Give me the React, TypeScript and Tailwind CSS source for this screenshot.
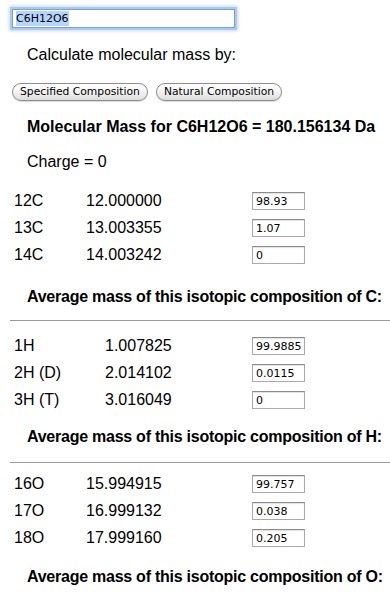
import React from 'react';

type Isotope = { name: string; mass: string; abundance: string };

const carbon: Isotope[] = [
    { name: '12C', mass: '12.000000', abundance: '98.93' },
    { name: '13C', mass: '13.003355', abundance: '1.07' },
    { name: '14C', mass: '14.003242', abundance: '0' },
];

const hydrogen: Isotope[] = [
    { name: '1H', mass: '1.007825', abundance: '99.9885' },
    { name: '2H (D)', mass: '2.014102', abundance: '0.0115' },
    { name: '3H (T)', mass: '3.016049', abundance: '0' },
];

const oxygen: Isotope[] = [
    { name: '16O', mass: '15.994915', abundance: '99.757' },
    { name: '17O', mass: '16.999132', abundance: '0.038' },
    { name: '18O', mass: '17.999160', abundance: '0.205' },
];

function IsotopeTable({ rows, cols }: { rows: Isotope[]; cols: string }) {
    return (
        <div className="pl-[14px]">
            {rows.map((r) => (
                <div key={r.name} className={`grid ${cols} items-center h-[27px]`}>
                    <span>{r.name}</span>
                    <span>{r.mass}</span>
                    <div className="w-[53px] h-[18px] border border-[#a9a9a9] border-t-[#8c8c8c] bg-white flex items-center pl-[3px] pt-[1px] text-[11px] leading-none font-['DejaVu_Sans',sans-serif] shadow-[inset_0_1px_1px_rgba(0,0,0,0.12)]">
                        {r.abundance}
                    </div>
                </div>
            ))}
        </div>
    );
}

function Heading({ children, tight }: { children: React.ReactNode; tight?: boolean }) {
    return (
        <div className={`pl-[27px] h-[18px] leading-[18px] font-bold whitespace-nowrap ${tight ? 'tracking-[-0.25px]' : ''}`}>
            {children}
        </div>
    );
}

function Btn({ children }: { children: React.ReactNode }) {
    return (
        <div className="h-[18px] px-[7px] rounded-full border border-[#8e8e8e] bg-gradient-to-b from-white via-[#f4f4f4] to-[#dcdcdc] flex items-center text-[10.75px] font-['DejaVu_Sans',sans-serif] shadow-[0_1px_1px_rgba(0,0,0,0.15)]">
            {children}
        </div>
    );
}

export default function App() {
    return (
        <div className="w-[390px] h-[595px] overflow-hidden bg-white text-black text-[16px] font-['Liberation_Sans',Arial,sans-serif] pt-[9px]">
            {/* Formula input */}
            <div className="ml-[12px] w-[223px] h-[19px] border border-[#7f9fc9] bg-white flex items-center pl-[3px] shadow-[0_0_0_2px_#a9caf2,0_0_3px_3px_rgba(110,160,225,0.4)]">
                <span className="bg-[#b5d5ff] text-[11px] leading-[15px] font-['DejaVu_Sans',sans-serif]">C6H12O6</span>
            </div>

            <div className="mt-[18px] pl-[27px] h-[18px] leading-[18px]">Calculate molecular mass by:</div>

            <div className="mt-[19px] pl-[12px] flex gap-[8px]">
                <Btn>Specified Composition</Btn>
                <Btn>Natural Composition</Btn>
            </div>

            <div className="mt-[17px]">
                <Heading>Molecular Mass for C6H12O6 = 180.156134 Da</Heading>
            </div>

            <div className="mt-[17px] pl-[27px] h-[18px] leading-[18px]">Charge = 0</div>

            {/* Carbon */}
            <div className="mt-[16px]">
                <IsotopeTable rows={carbon} cols="grid-cols-[72px_166px_auto]" />
            </div>
            <div className="mt-[20px]">
                <Heading tight>Average mass of this isotopic composition of C:</Heading>
            </div>

            <div className="mt-[14px] ml-[10px] border-t border-[#9b9b9b]" />

            {/* Hydrogen */}
            <div className="mt-[11px]">
                <IsotopeTable rows={hydrogen} cols="grid-cols-[91px_147px_auto]" />
            </div>
            <div className="mt-[15px]">
                <Heading tight>Average mass of this isotopic composition of H:</Heading>
            </div>

            <div className="mt-[16px] ml-[10px] border-t border-[#9b9b9b]" />

            {/* Oxygen */}
            <div className="mt-[7px]">
                <IsotopeTable rows={oxygen} cols="grid-cols-[72px_166px_auto]" />
            </div>
            <div className="mt-[17px]">
                <Heading tight>Average mass of this isotopic composition of O:</Heading>
            </div>
        </div>
    );
}
